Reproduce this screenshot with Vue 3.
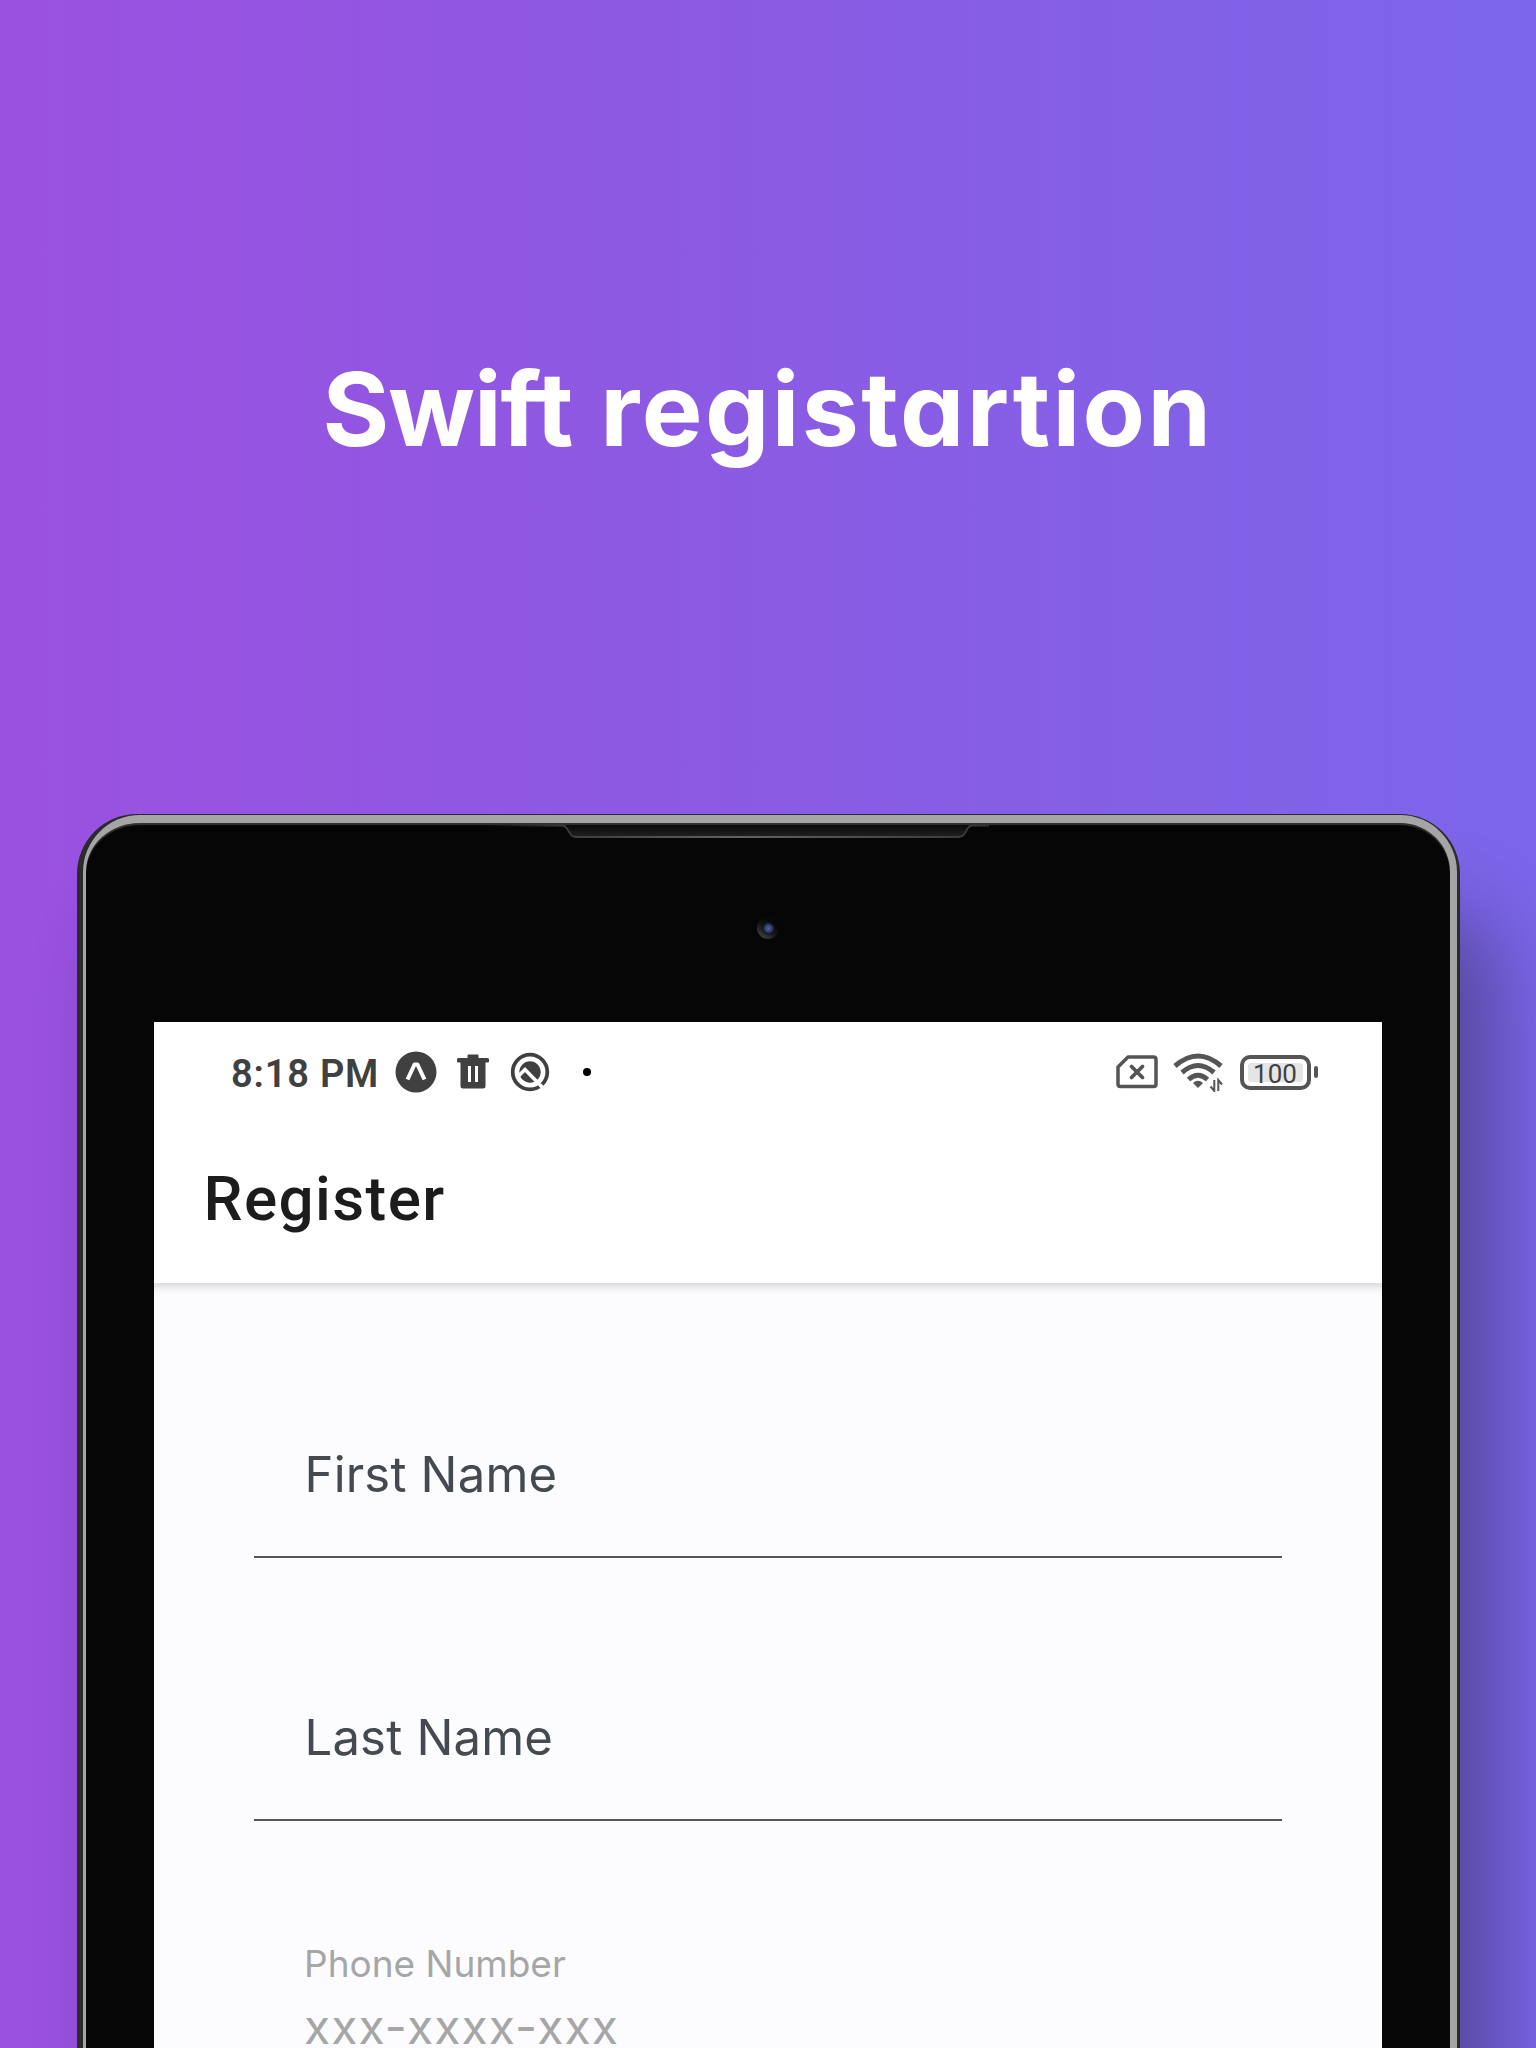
<script setup>
const fields = [
  { id: 'first', label: 'First Name' },
  { id: 'last', label: 'Last Name' },
]
</script>

<template>
  <main class="promo">
    <h1 class="headline"><span class="lead">Swift</span> <span class="rest">registartion</span></h1>

    <section class="tablet">
      <div class="bezel">
        <svg class="speaker" width="500" height="20" viewBox="0 0 500 20">
          <defs>
            <linearGradient id="edge" gradientUnits="userSpaceOnUse" x1="0" x2="500" y1="0" y2="0">
              <stop offset="0" stop-color="#333" stop-opacity="0" />
              <stop offset="0.14" stop-color="#3a3a3a" />
              <stop offset="0.5" stop-color="#626262" />
              <stop offset="0.96" stop-color="#3a3a3a" />
              <stop offset="1" stop-color="#333" />
            </linearGradient>
            <linearGradient id="slot" x1="0" x2="0" y1="0" y2="1">
              <stop offset="0" stop-color="#0b0b0b" />
              <stop offset="1" stop-color="#202020" />
            </linearGradient>
          </defs>
          <path d="M76 1.500L84.500 12.500H473L481 1.500Z" fill="url(#slot)" />
          <path d="M0 1.500H73Q76 1.500 77.500 4L82 11Q83.500 13 87 13H470Q473 13 475 10.500L479 4Q480.500 1.500 484 1.500H500" fill="none" stroke="url(#edge)" stroke-width="1.800" />
        </svg>
        <i class="camera"></i>

        <div class="screen">
          <div class="statusbar">
            <span class="time">8:18 PM</span>
            <svg class="expo" width="42" height="42" viewBox="0 0 42 42">
              <circle cx="21" cy="21" r="20.500" fill="#404040" />
              <path d="M12.500 28.500L19.500 13.500H22.500L29.500 28.500" fill="none" stroke="#fff" stroke-width="4" stroke-linejoin="round" />
            </svg>
            <svg class="trash" width="32" height="36" viewBox="0 0 32 36">
              <path d="M10.500 4V1.500Q10.500 0.500 11.500 0.500H20.500Q21.500 0.500 21.500 1.500V4H30.500Q32 4 32 5.500V7.500Q32 8.500 30.500 8.500H28.500V32Q28.500 34.500 26 34.500H6Q3.500 34.500 3.500 32V8.500H1.500Q0 8.500 0 7V5.500Q0 4 1.500 4Z" fill="#404040" />
              <path d="M12.500 12V28M19.500 12V28" stroke="#fff" stroke-width="3" />
            </svg>
            <svg class="lens" width="40" height="40" viewBox="0 0 40 40">
              <circle cx="20" cy="20" r="17.300" fill="none" stroke="#404040" stroke-width="3.800" />
              <circle cx="20" cy="20" r="10.700" fill="#404040" />
              <path d="M8.500 24L15 17.500L34 37" fill="none" stroke="#fff" stroke-width="3.600" />
            </svg>
            <i class="dot"></i>
            <svg class="sim" width="42" height="34" viewBox="0 0 42 34">
              <path d="M12 2H37.500Q40 2 40 4.500V29Q40 31.500 37.500 31.500H4.500Q2 31.500 2 29V12Z" fill="none" stroke="#555" stroke-width="3.500" stroke-linejoin="round" />
              <path d="M15.500 11.500L26.500 22.500M26.500 11.500L15.500 22.500" stroke="#555" stroke-width="3.800" stroke-linecap="round" />
            </svg>
            <svg class="wifi" width="50" height="40" viewBox="0 0 50 40">
              <g fill="none" stroke="#555" stroke-width="5">
                <path d="M2 14Q25 -6 48 14" />
                <path d="M9 20.500Q25 6.500 41 20.500" />
                <path d="M15.500 27.500Q25 19 34.500 27.500" />
              </g>
              <path d="M20 31Q25 26.500 30 31L25 36Z" fill="#555" />
              <path d="M41.300 28V39L37.500 34.500M45.300 39V28L49 32.500" fill="none" stroke="#555" stroke-width="2" />
            </svg>
            <div class="battery"><span>100</span></div>
            <i class="tip"></i>
          </div>

          <header class="appbar">Register</header>

          <form class="form">
            <div v-for="field in fields" :key="field.id" class="field">
              <label :class="field.id">{{ field.label }}</label>
            </div>
            <div class="phone">
              <label>Phone Number</label>
              <p>xxx-xxxx-xxx</p>
            </div>
          </form>
        </div>
      </div>
    </section>
  </main>
</template>

<style>
body {
  overflow: hidden;
}
</style>

<style scoped>
* {
  box-sizing: border-box;
}
.promo {
  width: 1536px;
  height: 2048px;
  overflow: hidden;
  background: linear-gradient(90deg, #9b51e0, #8c5ae3 46%, #7c66ea);
  display: flex;
  flex-direction: column;
  align-items: center;
}
.headline {
  flex: none;
  height: 814px;
  margin: 0;
  padding-top: 344px;
  color: #fff;
  font: 700 102px/130px Inter, sans-serif;
  font-feature-settings: 'cv11';
  word-spacing: 4px;
  white-space: nowrap;
}
.lead {
  letter-spacing: -1.100px;
}
.rest {
  letter-spacing: 2.400px;
}
.tablet {
  flex: none;
  width: 1383px;
  height: 1400px;
  padding: 1px;
  border-radius: 60px;
  background: #2b2b2b;
  box-shadow: 40px 100px 80px rgba(40, 40, 70, 0.45);
  display: flex;
}
.bezel {
  position: relative;
  flex: 1;
  border-style: solid;
  border-color: #a5a5a5;
  border-width: 8px 7px 0 3px;
  margin: 0 2px 0 5px;
  border-radius: 57px;
  background: #060606;
  box-shadow: inset 0 2px 1px #333;
  padding: 199px 67.500px 0 68px;
}
.speaker {
  position: absolute;
  left: 403px;
  top: 1px;
}
.camera {
  position: absolute;
  left: 671px;
  top: 94px;
  width: 22px;
  height: 22px;
  border-radius: 50%;
  background:
    radial-gradient(circle at 52% 52%, #5b62a0 0, #2c3262 26%, #101226 34%, transparent 40%),
    linear-gradient(35deg, #484848 8%, #171717 42%, #080808 70%);
}
.screen {
  height: 1200px;
  background: #fcfcfe;
}
.statusbar {
  height: 100px;
  background: #fff;
  display: flex;
  align-items: center;
  padding: 0 64.500px 0 77.500px;
}
.time {
  width: 164px;
  padding-top: 3px;
  color: #404040;
  font: 600 38px/44px Roboto, sans-serif;
  letter-spacing: 0.800px;
  white-space: nowrap;
}
.expo { margin-right: 19.500px; }
.trash { margin-right: 21px; }
.lens { margin-right: 33px; }
.dot {
  width: 8px;
  height: 8px;
  border-radius: 50%;
  background: #000;
  margin-right: auto;
}
.sim { margin-right: 15px; }
.wifi { margin-right: 17px; }
.battery {
  width: 71px;
  height: 35px;
  border: 4px solid #555;
  border-radius: 10px;
  padding: 4px;
  display: flex;
}
.battery span {
  flex: 1;
  background: #e5e5e5;
  border-radius: 3px;
  color: #404040;
  font: 400 26px/22px Roboto, sans-serif;
  text-align: center;
}
.tip {
  width: 4px;
  height: 12px;
  border-radius: 2px;
  background: #555;
  margin-left: 3px;
}
.appbar {
  position: relative;
  height: 161px;
  background: #fff;
  box-shadow: 0 -4px 10px 6px rgba(0, 0, 0, 0.2);
  clip-path: inset(0 0 -16px 0);
  padding: 41px 50px 0;
  color: #1c1c1e;
  font: 500 62px/72px Roboto, sans-serif;
  letter-spacing: 1.400px;
}
.form {
  padding: 12px 100px 0;
  color: #444a50;
  font: 400 49px/60px Inter, sans-serif;
}
.field {
  height: 263px;
  border-bottom: 2px solid #55565a;
  padding: 150px 51px 0;
  letter-spacing: 0.200px;
}
.field label {
  display: block;
}
.phone {
  padding: 118px 50.500px 0;
  color: #a6a6a6;
}
.phone label {
  display: block;
  font-size: 37px;
  line-height: 50px;
}
.phone p {
  margin: 18px 0 0;
  font-size: 48px;
  line-height: 40px;
  letter-spacing: 1.100px;
}
</style>
